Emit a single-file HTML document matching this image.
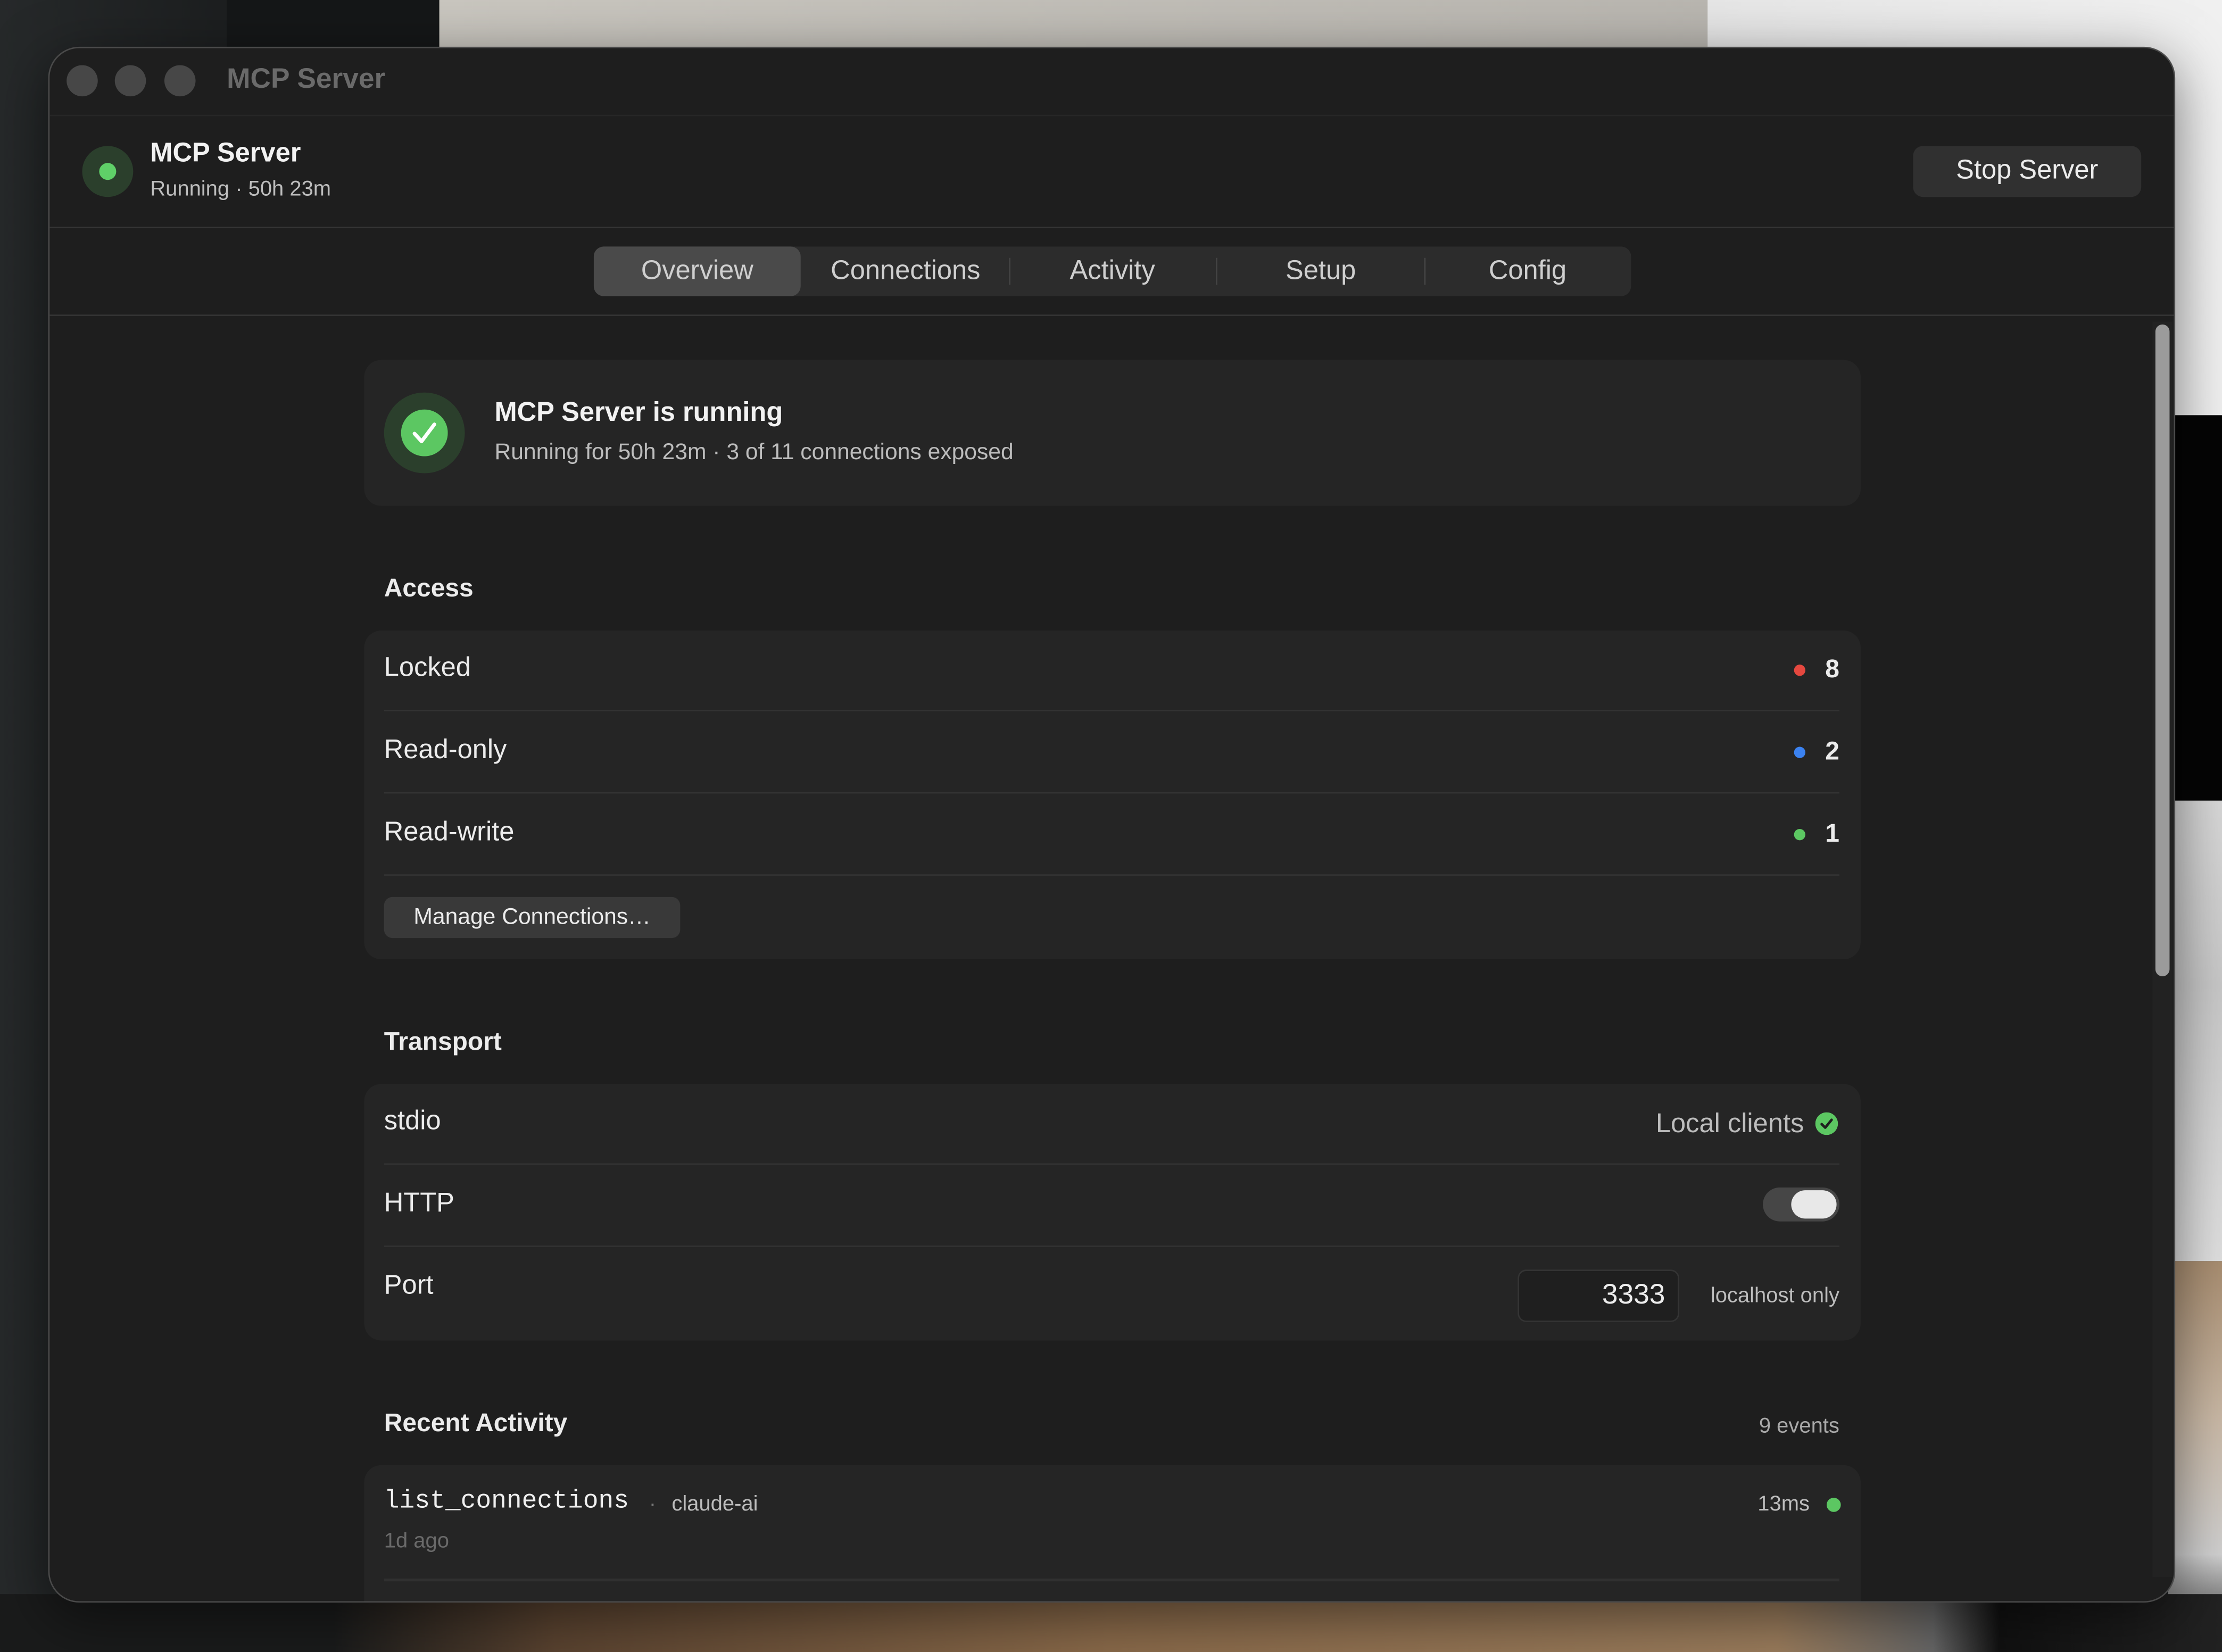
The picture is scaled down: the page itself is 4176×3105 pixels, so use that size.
<!DOCTYPE html>
<html><head><meta charset="utf-8"><style>
*{margin:0;padding:0;box-sizing:border-box}
html,body{width:4176px;height:3104px;overflow:hidden;background:#1c1f20}
#w{position:absolute;left:0;top:0;width:1568px;height:1166px;transform:scale(2.66327);transform-origin:0 0;font-family:"Liberation Sans",sans-serif;color:#ececec}
.a{position:absolute}
.t{position:absolute;white-space:nowrap}
</style></head><body><div id="w">
<!-- background -->
<div class="a" style="left:0;top:0;width:310px;height:1166px;background:linear-gradient(90deg,#26292a,#1b1d1e 60%,#2a2c2d)"></div>
<div class="a" style="left:160px;top:0;width:150px;height:40px;background:#151718"></div>
<div class="a" style="left:310px;top:0;width:900px;height:40px;background:linear-gradient(90deg,#c9c6bf,#b9b6b0)"></div>
<div class="a" style="left:1205px;top:0;width:363px;height:300px;background:linear-gradient(90deg,#e6e6e6,#f0f0f0)"></div>
<div class="a" style="left:1530px;top:293px;width:38px;height:272px;background:#050505"></div>
<div class="a" style="left:1530px;top:565px;width:38px;height:325px;background:linear-gradient(#d8d8d8,#c8c8c8 40%,#e0e0e0)"></div>
<div class="a" style="left:1530px;top:890px;width:38px;height:276px;background:linear-gradient(#a88d70,#c9b8a5 40%,#d0d0d0 75%,#222)"></div>
<div class="a" style="left:0;top:1125px;width:1568px;height:41px;background:linear-gradient(90deg,#1a1b1b 15%,#5a4330 25%,#8a6a4a 50%,#9a7c5c 80%,#666 87%,#111 90%,#222)"></div>
<!-- window -->
<div class="a" style="left:34px;top:33px;width:1501px;height:1098px;background:#1e1e1e;border-radius:22px;border:1px solid #4a4a4a;overflow:hidden;box-shadow:0 10px 40px rgba(0,0,0,.5)">
 <div style="position:absolute;left:-34px;top:-33px;width:1568px;height:1166px">
 <div class="a" style="left:46px;top:45px;width:22px;height:22px;border-radius:50%;background:#474747"></div>
 <div class="a" style="left:80px;top:45px;width:22px;height:22px;border-radius:50%;background:#474747"></div>
 <div class="a" style="left:115px;top:45px;width:22px;height:22px;border-radius:50%;background:#474747"></div>
 <div class="t" style="left:159px;top:44px;font-size:20px;font-weight:bold;color:#6a6a6a">MCP Server</div>
 <div class="a" style="left:34px;top:80px;width:1501px;height:1px;background:#262626"></div>
 <div class="a" style="left:57px;top:102px;width:36px;height:36px;border-radius:50%;background:#2b3f2c"></div>
 <div class="a" style="left:69px;top:114px;width:12px;height:12px;border-radius:50%;background:#5fd068"></div>
 <div class="t" style="left:105px;top:97px;font-size:19px;font-weight:bold;color:#f2f2f2">MCP Server</div>
 <div class="t" style="left:105px;top:124px;font-size:15px;color:#bdbdbd">Running · 50h 23m</div>
 <div class="a" style="left:1349px;top:102px;width:161px;height:36px;border-radius:7px;background:#303030"></div>
 <div class="t" style="left:1349px;top:109px;width:161px;text-align:center;font-size:19px;color:#ececec">Stop Server</div>
 <div class="a" style="left:34px;top:159px;width:1501px;height:1px;background:#353535"></div>
 <div class="a" style="left:418px;top:173px;width:732px;height:35px;border-radius:7px;background:#2c2c2c"></div>
 <div class="a" style="left:418px;top:173px;width:146px;height:35px;border-radius:7px;background:#4a4a4a"></div>
 <div class="a" style="left:711px;top:181px;width:1px;height:19px;background:#444"></div>
 <div class="a" style="left:857px;top:181px;width:1px;height:19px;background:#444"></div>
 <div class="a" style="left:1004px;top:181px;width:1px;height:19px;background:#444"></div>
 <div class="t" style="left:418px;top:180px;width:146px;text-align:center;font-size:19px;color:#cfcfcf">Overview</div>
 <div class="t" style="left:565px;top:180px;width:146px;text-align:center;font-size:19px;color:#cfcfcf">Connections</div>
 <div class="t" style="left:711px;top:180px;width:146px;text-align:center;font-size:19px;color:#cfcfcf">Activity</div>
 <div class="t" style="left:858px;top:180px;width:146px;text-align:center;font-size:19px;color:#cfcfcf">Setup</div>
 <div class="t" style="left:1004px;top:180px;width:146px;text-align:center;font-size:19px;color:#cfcfcf">Config</div>
 <div class="a" style="left:34px;top:221px;width:1501px;height:1px;background:#353535"></div>
 <!-- scrollbar -->
 <div class="a" style="left:1518px;top:226px;width:14px;height:886px;background:#222"></div>
 <div class="a" style="left:1520px;top:228px;width:10px;height:460px;border-radius:5px;background:#9b9b9b"></div>
 <!-- status card -->
 <div class="a" style="left:256px;top:253px;width:1056px;height:103px;border-radius:12px;background:#252525"></div>
 <div class="a" style="left:270px;top:276px;width:57px;height:57px;border-radius:50%;background:#2b3f2c"></div>
 <svg class="a" style="left:282px;top:288px" width="33" height="33" viewBox="0 0 33 33"><circle cx="16.5" cy="16.5" r="16.5" fill="#5cc762"/><path d="M9.5 17 L14.5 22.5 L23.5 10.5" stroke="#fff" stroke-width="2.6" fill="none" stroke-linecap="round" stroke-linejoin="round"/></svg>
 <div class="t" style="left:348px;top:280px;font-size:19px;font-weight:bold;color:#f2f2f2">MCP Server is running</div>
 <div class="t" style="left:348px;top:310px;font-size:16px;color:#bdbdbd">Running for 50h 23m · 3 of 11 connections exposed</div>
 <!-- access -->
 <div class="t" style="left:270px;top:404px;font-size:18px;font-weight:bold;color:#ececec">Access</div>
 <div class="a" style="left:256px;top:444px;width:1056px;height:232px;border-radius:12px;background:#252525"></div>
 <div class="t" style="left:270px;top:460px;font-size:19px">Locked</div>
 <div class="a" style="left:1265px;top:468px;width:8px;height:8px;border-radius:50%;background:#e5483f"></div>
 <div class="t" style="left:1280px;top:461px;width:17px;text-align:right;font-size:18px;font-weight:bold">8</div>
 <div class="a" style="left:270px;top:500px;width:1027px;height:1px;background:#333"></div>
 <div class="t" style="left:270px;top:518px;font-size:19px">Read-only</div>
 <div class="a" style="left:1265px;top:526px;width:8px;height:8px;border-radius:50%;background:#3b82f0"></div>
 <div class="t" style="left:1280px;top:519px;width:17px;text-align:right;font-size:18px;font-weight:bold">2</div>
 <div class="a" style="left:270px;top:558px;width:1027px;height:1px;background:#333"></div>
 <div class="t" style="left:270px;top:576px;font-size:19px">Read-write</div>
 <div class="a" style="left:1265px;top:584px;width:8px;height:8px;border-radius:50%;background:#5cc762"></div>
 <div class="t" style="left:1280px;top:577px;width:17px;text-align:right;font-size:18px;font-weight:bold">1</div>
 <div class="a" style="left:270px;top:616px;width:1027px;height:1px;background:#333"></div>
 <div class="a" style="left:270px;top:632px;width:209px;height:29px;border-radius:6px;background:#393939"></div>
 <div class="t" style="left:270px;top:638px;width:209px;text-align:center;font-size:16px">Manage Connections…</div>
 <!-- transport -->
 <div class="t" style="left:270px;top:724px;font-size:18px;font-weight:bold">Transport</div>
 <div class="a" style="left:256px;top:764px;width:1056px;height:181px;border-radius:12px;background:#252525"></div>
 <div class="t" style="left:270px;top:780px;font-size:19px">stdio</div>
 <div class="t" style="left:1100px;top:782px;width:172px;text-align:right;font-size:19px;color:#bdbdbd">Local clients</div>
 <svg class="a" style="left:1280px;top:784px" width="16" height="16" viewBox="0 0 16 16"><circle cx="8" cy="8" r="8" fill="#5cc762"/><path d="M4.5 8.3 L7 10.8 L11.5 5.3" stroke="#1e1e1e" stroke-width="1.8" fill="none" stroke-linecap="round" stroke-linejoin="round"/></svg>
 <div class="a" style="left:270px;top:820px;width:1027px;height:1px;background:#333"></div>
 <div class="t" style="left:270px;top:838px;font-size:19px">HTTP</div>
 <div class="a" style="left:1243px;top:837px;width:54px;height:24px;border-radius:12px;background:#464646"></div>
 <div class="a" style="left:1263px;top:839px;width:32px;height:20px;border-radius:10px;background:#e8e8e8"></div>
 <div class="a" style="left:270px;top:878px;width:1027px;height:1px;background:#333"></div>
 <div class="t" style="left:270px;top:896px;font-size:19px">Port</div>
 <div class="a" style="left:1070px;top:895px;width:114px;height:37px;border-radius:6px;background:#1f1f1f;border:1px solid #343434"></div>
 <div class="t" style="left:1070px;top:902px;width:104px;text-align:right;font-size:20px">3333</div>
 <div class="t" style="left:1190px;top:905px;width:107px;text-align:right;font-size:15px;color:#bdbdbd">localhost only</div>
 <!-- recent -->
 <div class="t" style="left:270px;top:993px;font-size:18px;font-weight:bold">Recent Activity</div>
 <div class="t" style="left:1197px;top:997px;width:100px;text-align:right;font-size:15px;color:#aaa">9 events</div>
 <div class="a" style="left:256px;top:1033px;width:1056px;height:140px;border-radius:12px;background:#252525"></div>
 <div class="t" style="left:270px;top:1049px;font-size:18px;font-family:'Liberation Mono',monospace;color:#f0f0f0">list_connections</div>
 <div class="t" style="left:457px;top:1052px;font-size:15px;color:#777">·</div>
 <div class="t" style="left:473px;top:1052px;font-size:15px;color:#bdbdbd">claude-ai</div>
 <div class="t" style="left:270px;top:1078px;font-size:15px;color:#6a6a6a">1d ago</div>
 <div class="t" style="left:1200px;top:1052px;width:76px;text-align:right;font-size:15px;color:#bdbdbd">13ms</div>
 <div class="a" style="left:1288px;top:1056px;width:10px;height:10px;border-radius:50%;background:#5cc762"></div>
 <div class="a" style="left:270px;top:1113px;width:1027px;height:2px;background:#303030"></div>
 </div>
</div>
</div></body></html>
